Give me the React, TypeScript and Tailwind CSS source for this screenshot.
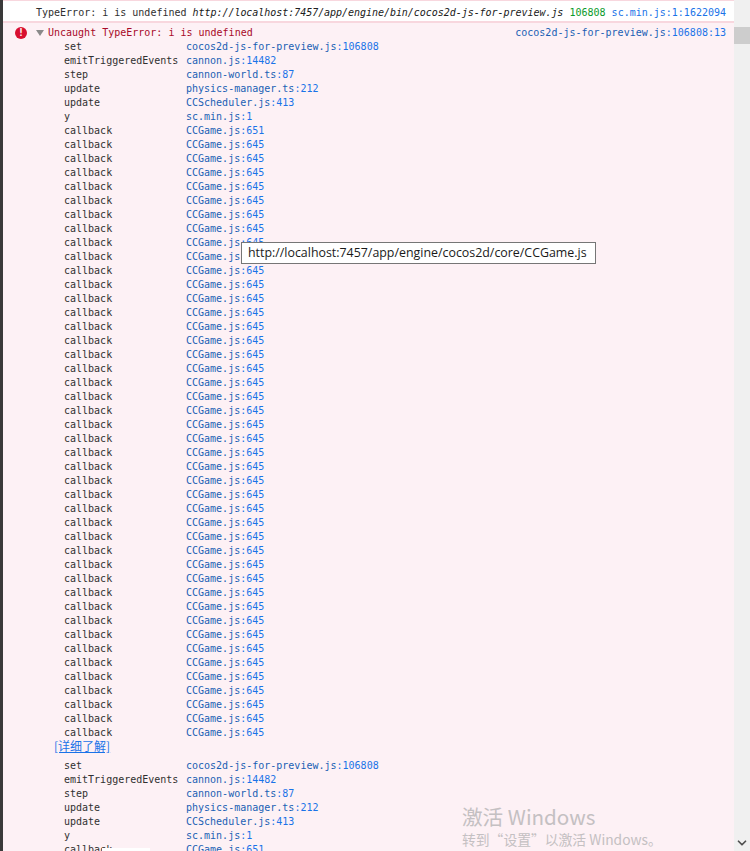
import { ChevronDown } from 'lucide-react';

const mono = "font-['DejaVu_Sans_Mono','Liberation_Mono',monospace] text-[10px]";

type Frame = { fn: string; src: string };

const head: Frame[] = [
  { fn: 'set', src: 'cocos2d-js-for-preview.js:106808' },
  { fn: 'emitTriggeredEvents', src: 'cannon.js:14482' },
  { fn: 'step', src: 'cannon-world.ts:87' },
  { fn: 'update', src: 'physics-manager.ts:212' },
  { fn: 'update', src: 'CCScheduler.js:413' },
  { fn: 'y', src: 'sc.min.js:1' },
];

const firstStack: Frame[] = [
  ...head,
  { fn: 'callback', src: 'CCGame.js:651' },
  ...Array.from({ length: 43 }, () => ({ fn: 'callback', src: 'CCGame.js:645' })),
];

const secondStack: Frame[] = [...head, { fn: 'callback', src: 'CCGame.js:651' }];

function StackRow({ frame }: { frame: Frame }) {
  const [file, line] = frame.src.split(':');
  return (
    <div className="flex h-[14px] items-center pl-[61px] leading-[14px]">
      <span className="w-[122px] shrink-0 text-[#303030]">{frame.fn}</span>
      <span className="whitespace-nowrap text-[#1a5fb4]">
        {file}
        <span className="text-[#1a73e8]">:{line}</span>
      </span>
    </div>
  );
}

export default function App() {
  return (
    <div className={`relative flex h-[851px] w-[750px] overflow-hidden bg-white ${mono}`}>
      {/* Console */}
      <div className="flex min-w-0 flex-1 flex-col border-l-[3px] border-[#3a3a3a]">
        <div className="flex h-[22px] shrink-0 items-center justify-between border-y border-[#f8d7de] pl-[33px] pr-[8px] pt-[3px] text-[#303030]">
          <span className="whitespace-nowrap">
            TypeError: i is undefined{' '}
            <i className="tracking-[-0.04px] text-[#202020]">http://localhost:7457/app/engine/bin/cocos2d-js-for-preview.js</i>{' '}
            <span className="text-[#0a9a2a]">106808</span>
          </span>
          <span className="text-[#1a73e8]">sc.min.js:1:1622094</span>
        </div>
        <div className="h-[1px] shrink-0 bg-[#f8d7de]" />
        <div className="flex-1 bg-[#fdf1f5]">
          <div className="flex h-[18px] items-center justify-between pr-[8px] pt-[1px] text-[#a80a28]">
            <div className="flex items-center">
              <span className="ml-[12px] flex h-[12px] w-[12px] items-center justify-center rounded-full bg-[#d80f2f] text-[10px] font-bold leading-none text-white">
                !
              </span>
              <span className="ml-[9px] h-0 w-0 border-x-[4px] border-t-[6px] border-x-transparent border-t-[#8a8a8a]" />
              <span className="ml-[4px]">Uncaught TypeError: i is undefined</span>
            </div>
            <span className="whitespace-nowrap text-[#1a5fb4]">
              cocos2d-js-for-preview.js<span className="text-[#1a73e8]">:106808:13</span>
            </span>
          </div>
          <div className="mt-[-1px]">
            {firstStack.map((frame, i) => (
              <StackRow key={i} frame={frame} />
            ))}
          </div>
          <div className="h-[14px] pl-[51px] font-['Noto_Sans_CJK_SC',sans-serif] text-[12px] leading-[12px] text-[#1a73e8] underline">
            [详细了解]
          </div>
          <div className="mt-[5px]">
            {secondStack.map((frame, i) => (
              <StackRow key={i} frame={frame} />
            ))}
          </div>
        </div>
      </div>

      {/* Scrollbar */}
      <div className="flex w-[16px] shrink-0 flex-col justify-end bg-[#f0f0f0]">
        <div className="absolute right-0 top-[27px] h-[17px] w-[16px] bg-[#cdcdcd]" />
        <ChevronDown className="mb-[1px] h-[14px] w-[14px] self-center text-[#505050]" strokeWidth={3} />
      </div>

      {/* Tooltip */}
      <div className="absolute left-[241px] top-[242px] flex h-[22px] w-[355px] items-center border border-[#767676] bg-white pl-[6px] font-['Open_Sans','Noto_Sans',sans-serif] text-[12.4px] text-[#1a1a1a]">
        http://localhost:7457/app/engine/cocos2d/core/CCGame.js
      </div>

      {/* Second tooltip, cut off at the bottom edge */}
      <div className="absolute left-[102px] top-[848px] h-[3px] w-[48px] bg-white" />

      {/* Watermark */}
      <div className="pointer-events-none absolute left-[462px] top-[803px] font-['Noto_Sans_CJK_SC',sans-serif] text-[#c4c0c2]">
        <div className="text-[20.6px] leading-[26px]">激活 Windows</div>
        <div className="text-[13.8px] leading-[20px]">转到“设置”以激活 Windows。</div>
      </div>
    </div>
  );
}
